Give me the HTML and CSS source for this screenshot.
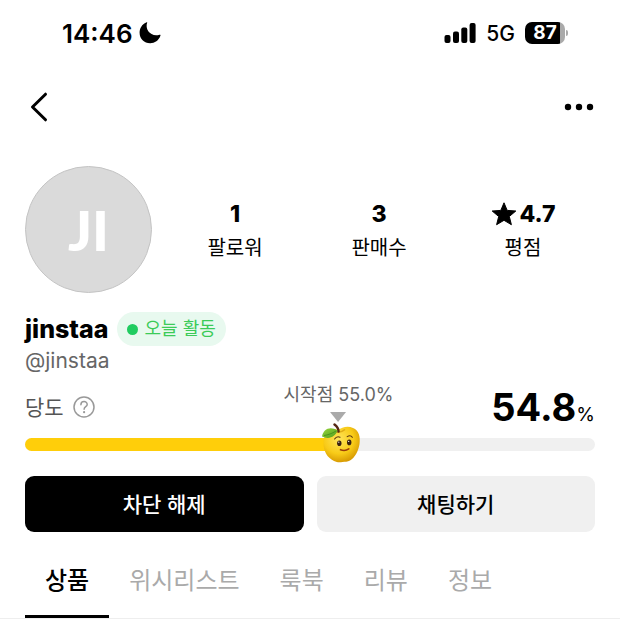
FILE: index.html
```html
<!DOCTYPE html>
<html lang="ko">
<head>
    <meta charset="UTF-8">
    <meta name="viewport" content="width=device-width, initial-scale=1.0">
    <title>jinstaa</title>
    <link rel="stylesheet" href="styles.css">
</head>
<body>
    <div class="status-bar">
        <div class="status-left">
            <span class="time">14:46</span>
            <svg class="moon" width="22" height="22" viewBox="0 0 22 22" aria-hidden="true">
                <path d="M8.2 0.6C5.6 7.6 12 15.4 20.5 12.8C21.3 12.6 21.8 13 21.4 13.8C19.8 18.4 15.8 21.3 11.2 21.3C5.2 21.3 0.6 16.7 0.6 10.8C0.6 6.2 3 2.2 7.2 0.4C7.8 0.1 8.4 0.1 8.2 0.6Z"/>
            </svg>
        </div>
        <div class="status-right">
            <svg class="signal" width="32" height="20" viewBox="0 0 32 20" aria-hidden="true">
                <rect x="0.5" y="12" width="6" height="8" rx="2"/>
                <rect x="9" y="8.5" width="6" height="11.5" rx="2"/>
                <rect x="17.3" y="4.5" width="6" height="15.5" rx="2"/>
                <rect x="25.6" y="0" width="6" height="20" rx="2"/>
            </svg>
            <span class="network">5G</span>
            <div class="battery">
                <span class="battery-level">87</span>
            </div>
        </div>
    </div>

    <header class="nav-bar">
        <button type="button" class="icon-btn" aria-label="뒤로">
            <svg width="18" height="30" viewBox="0 0 18 30">
                <path d="M15.5 2.200L2.500 15L15.500 27.800" fill="none" stroke="#000" stroke-width="3" stroke-linecap="round" stroke-linejoin="round"/>
            </svg>
        </button>
        <button type="button" class="icon-btn" aria-label="더보기">
            <svg width="30" height="30" viewBox="0 0 30 30">
                <circle cx="4" cy="15" r="3.2"/>
                <circle cx="15" cy="15" r="3.2"/>
                <circle cx="26" cy="15" r="3.2"/>
            </svg>
        </button>
    </header>

    <main class="profile">
        <section class="summary">
            <div class="avatar">JI</div>
            <div class="stats">
                <a href="#" class="stat"><b>1</b><span>팔로워</span></a>
                <a href="#" class="stat"><b>3</b><span>판매수</span></a>
                <a href="#" class="stat">
                    <b>
                        <svg width="26" height="24" viewBox="0 0 26 24" aria-hidden="true">
                            <path d="M13 0.8L16.200 8.400L24.800 9L18.300 14.500L20.400 22.700L13 18.300L5.600 22.700L7.700 14.500L1.200 9L9.800 8.400Z" stroke="#000" stroke-linejoin="round"/>
                        </svg>4.7
                    </b>
                    <span>평점</span>
                </a>
            </div>
        </section>

        <section class="identity">
            <div class="name-row">
                <h1>jinstaa</h1>
                <span class="active-badge">오늘 활동</span>
            </div>
            <p class="handle">@jinstaa</p>
        </section>

        <section class="sweetness">
            <div class="sweetness-head">
                <label for="sweetness">당도</label>
                <button type="button" class="icon-btn" aria-label="당도 안내">
                    <svg width="22" height="22" viewBox="0 0 22 22" fill="none" stroke="#999">
                        <circle cx="11" cy="11" r="10" stroke-width="1.5"/>
                        <path d="M7.9 8.700C7.900 4.500 14.200 4.600 14.200 8.400C14.200 10.700 11.100 10.700 11.100 13.200" stroke-width="1.5" stroke-linecap="round"/>
                        <circle cx="11.1" cy="16.2" r="1.1" fill="#999" stroke="none"/>
                    </svg>
                </button>
                <p class="score">54.8<small>%</small></p>
            </div>
            <div class="meter">
                <progress id="sweetness" value="54.8" max="100"></progress>
                <div class="start-point" style="left: 55%">시작점 55.0%</div>
                <svg class="apple" style="left: 54.8%" width="40" height="42" viewBox="0 0 40 42" aria-hidden="true">
                    <defs>
                        <radialGradient id="skin" cx="0.42" cy="0.35" r="0.68">
                            <stop offset="0" stop-color="#ffe45a"/>
                            <stop offset="0.6" stop-color="#f8cb18"/>
                            <stop offset="1" stop-color="#d59600"/>
                        </radialGradient>
                        <linearGradient id="leaf" x1="0" y1="0" x2="1" y2="1">
                            <stop offset="0" stop-color="#9bd83c"/>
                            <stop offset="1" stop-color="#4d9b1d"/>
                        </linearGradient>
                    </defs>
                    <path d="M17 8C21 5 27 3.500 32 6C38 8.500 39.500 15 38.500 22C37.500 29 34 35.500 29 38.500C26.500 40 24 39.500 21.500 40C18.500 40.500 16 40.500 13 39C6 35.500 2.500 29 2.500 21C2.500 13 7 7.500 12 7C14 6.800 15.500 7.200 17 8Z" fill="url(#skin)"/>
                    <path d="M12 9C14.500 11 20 11 24 7.500" fill="none" stroke="#d49a08" stroke-width="1.5" opacity="0.7"/>
                    <path d="M17.5 9.500C17.500 6 15.500 4 13.500 2.500" fill="none" stroke="#552815" stroke-width="2.5" stroke-linecap="round"/>
                    <path d="M1 14.500C2 7.500 9 3.500 16.500 8.500C14.500 14.500 8 18 1 14.500Z" fill="url(#leaf)"/>
                    <path d="M3 13.500C7 13 11 11.500 15 9" fill="none" stroke="#3f8519" stroke-width="0.7"/>
                    <ellipse cx="18.3" cy="21.2" rx="2.2" ry="2.8" fill="#3a2010"/>
                    <ellipse cx="28.2" cy="20.4" rx="2.2" ry="2.8" fill="#3a2010"/>
                    <circle cx="17.8" cy="20.2" r="0.6" fill="#fff"/>
                    <circle cx="27.7" cy="19.4" r="0.6" fill="#fff"/>
                    <path d="M13.6 17C15 14.900 17.300 14.400 19 15.200M26.200 14.600C28.200 13.400 30.300 13.800 31.300 15.300" fill="none" stroke="#593211" stroke-width="1.1" stroke-linecap="round"/>
                    <path d="M19.5 27.700C22.500 28.900 25.500 28.500 27.800 26.800" fill="none" stroke="#9c3d09" stroke-width="1.6" stroke-linecap="round"/>
                </svg>
            </div>
        </section>

        <div class="actions">
            <button type="button" class="btn btn-dark">차단 해제</button>
            <button type="button" class="btn btn-light">채팅하기</button>
        </div>
    </main>

    <nav class="tabs">
        <a href="#" class="tab active" aria-current="page">상품</a>
        <a href="#" class="tab">위시리스트</a>
        <a href="#" class="tab">룩북</a>
        <a href="#" class="tab">리뷰</a>
        <a href="#" class="tab">정보</a>
    </nav>
</body>
</html>
```
FILE: styles.css
```css
* {
    box-sizing: border-box;
}

body {
    margin: 0;
    background: #fff;
    color: #000;
    font-family: Inter, "Noto Sans CJK KR", sans-serif;
}

h1,
p {
    margin: 0;
}

a {
    color: inherit;
    text-decoration: none;
}

button {
    font-family: inherit;
    cursor: pointer;
}

svg {
    display: block;
}

/* status bar */
.status-bar {
    display: flex;
    justify-content: space-between;
    align-items: center;
    height: 66px;
    padding: 0 55px 0 62px;
}

.status-left,
.status-right {
    display: flex;
    align-items: center;
}

.status-left {
    gap: 6px;
}

.status-right {
    gap: 10px;
}

.time {
    font-size: 26px;
    font-weight: 600;
}

.network {
    font-size: 21px;
    font-weight: 500;
}

.battery {
    position: relative;
    width: 40px;
    height: 22px;
    border-radius: 7px;
    background: linear-gradient(to right, #000 87%, #aaa 87%);
    color: #fff;
    text-align: center;
}

.battery::after {
    content: "";
    position: absolute;
    top: 8px;
    right: -3px;
    width: 2px;
    height: 6px;
    border-radius: 0 2px 2px 0;
    background: #aaa;
}

.battery-level {
    display: block;
    font-size: 19px;
    font-weight: 700;
    line-height: 22px;
}

/* top navigation */
.nav-bar {
    display: flex;
    justify-content: space-between;
    align-items: center;
    height: 82px;
    padding: 0 26px 0 30px;
}

.icon-btn {
    padding: 0;
    border: 0;
    background: none;
}

/* profile */
.profile {
    padding: 18px 25px 0;
}

.summary {
    display: flex;
    align-items: center;
    gap: 11px;
}

.avatar {
    display: flex;
    justify-content: center;
    align-items: center;
    flex: none;
    width: 127px;
    height: 127px;
    border: 1px solid #c4c4c4;
    border-radius: 50%;
    background: #dadada;
    color: #fff;
    font-family: Lato, sans-serif;
    font-size: 56px;
    font-weight: 900;
    line-height: 60px;
}

.stats {
    display: grid;
    grid-template-columns: repeat(3, 1fr);
    flex: 1;
}

.stat {
    display: flex;
    flex-direction: column;
    align-items: center;
    gap: 2px;
    padding-top: 2px;
    font-size: 20px;
    line-height: 32px;
}

.stat b {
    display: flex;
    align-items: center;
    gap: 3px;
    font-size: 23px;
    font-weight: 800;
}

.identity {
    margin-top: 19px;
}

.name-row {
    display: flex;
    align-items: center;
    gap: 9px;
}

.name-row h1 {
    font-size: 25px;
    font-weight: 800;
    line-height: 34px;
}

.active-badge {
    display: flex;
    align-items: center;
    gap: 6px;
    padding: 0 10px;
    border-radius: 17px;
    background: #e8f9ef;
    color: #3ccb58;
    font-size: 18px;
    line-height: 34px;
}

.active-badge::before {
    content: "";
    width: 11px;
    height: 11px;
    border-radius: 50%;
    background: #20cc60;
}

.handle {
    color: #666;
    font-size: 21px;
    line-height: 30px;
}

/* sweetness meter */
.sweetness-head {
    display: flex;
    align-items: center;
    gap: 9px;
    height: 62px;
    color: #555;
    font-size: 21px;
}

.sweetness-head label {
    padding-bottom: 3px;
}

.score {
    margin-left: auto;
    padding-top: 8px;
    color: #000;
    font-size: 38px;
    font-weight: 700;
    line-height: 62px;
}

.score small {
    font-size: 19px;
    font-weight: 400;
}

.meter {
    position: relative;
}

progress {
    display: block;
    width: 100%;
    height: 13px;
    border: 0;
    border-radius: 7px;
    overflow: hidden;
    background: #f0f0f0;
    appearance: none;
}

progress::-webkit-progress-bar {
    background: #f0f0f0;
}

progress::-webkit-progress-value {
    background: #ffce0a;
}

.start-point {
    position: absolute;
    bottom: 39px;
    padding-bottom: 3px;
    transform: translateX(-50%);
    color: #666;
    font-size: 18px;
    line-height: 28px;
    white-space: nowrap;
}

.start-point::after {
    content: "";
    position: absolute;
    left: 50%;
    bottom: -10px;
    margin-left: -8px;
    border: 8px solid transparent;
    border-top: 10px solid #aaa;
    border-bottom: 0;
}

.apple {
    position: absolute;
    bottom: -13px;
    margin-left: -16px;
}

/* buttons */
.actions {
    display: grid;
    grid-template-columns: 1fr 1fr;
    gap: 13px;
    margin-top: 25px;
}

.btn {
    height: 56px;
    padding: 0 0 3px;
    border: 0;
    border-radius: 9px;
    font-size: 21px;
    font-weight: 500;
}

.btn-dark {
    background: #000;
    color: #fff;
}

.btn-light {
    background: #f0f0f0;
    color: #000;
}

/* tabs */
.tabs {
    display: flex;
    margin-top: 14px;
    padding: 0 25px;
    border-bottom: 1px solid #eee;
}

.tab {
    padding: 0 20px;
    border-bottom: 3px solid transparent;
    color: #aaa;
    font-size: 24px;
    line-height: 69px;
}

.tab.active {
    border-color: #000;
    color: #000;
    font-weight: 500;
}
```
